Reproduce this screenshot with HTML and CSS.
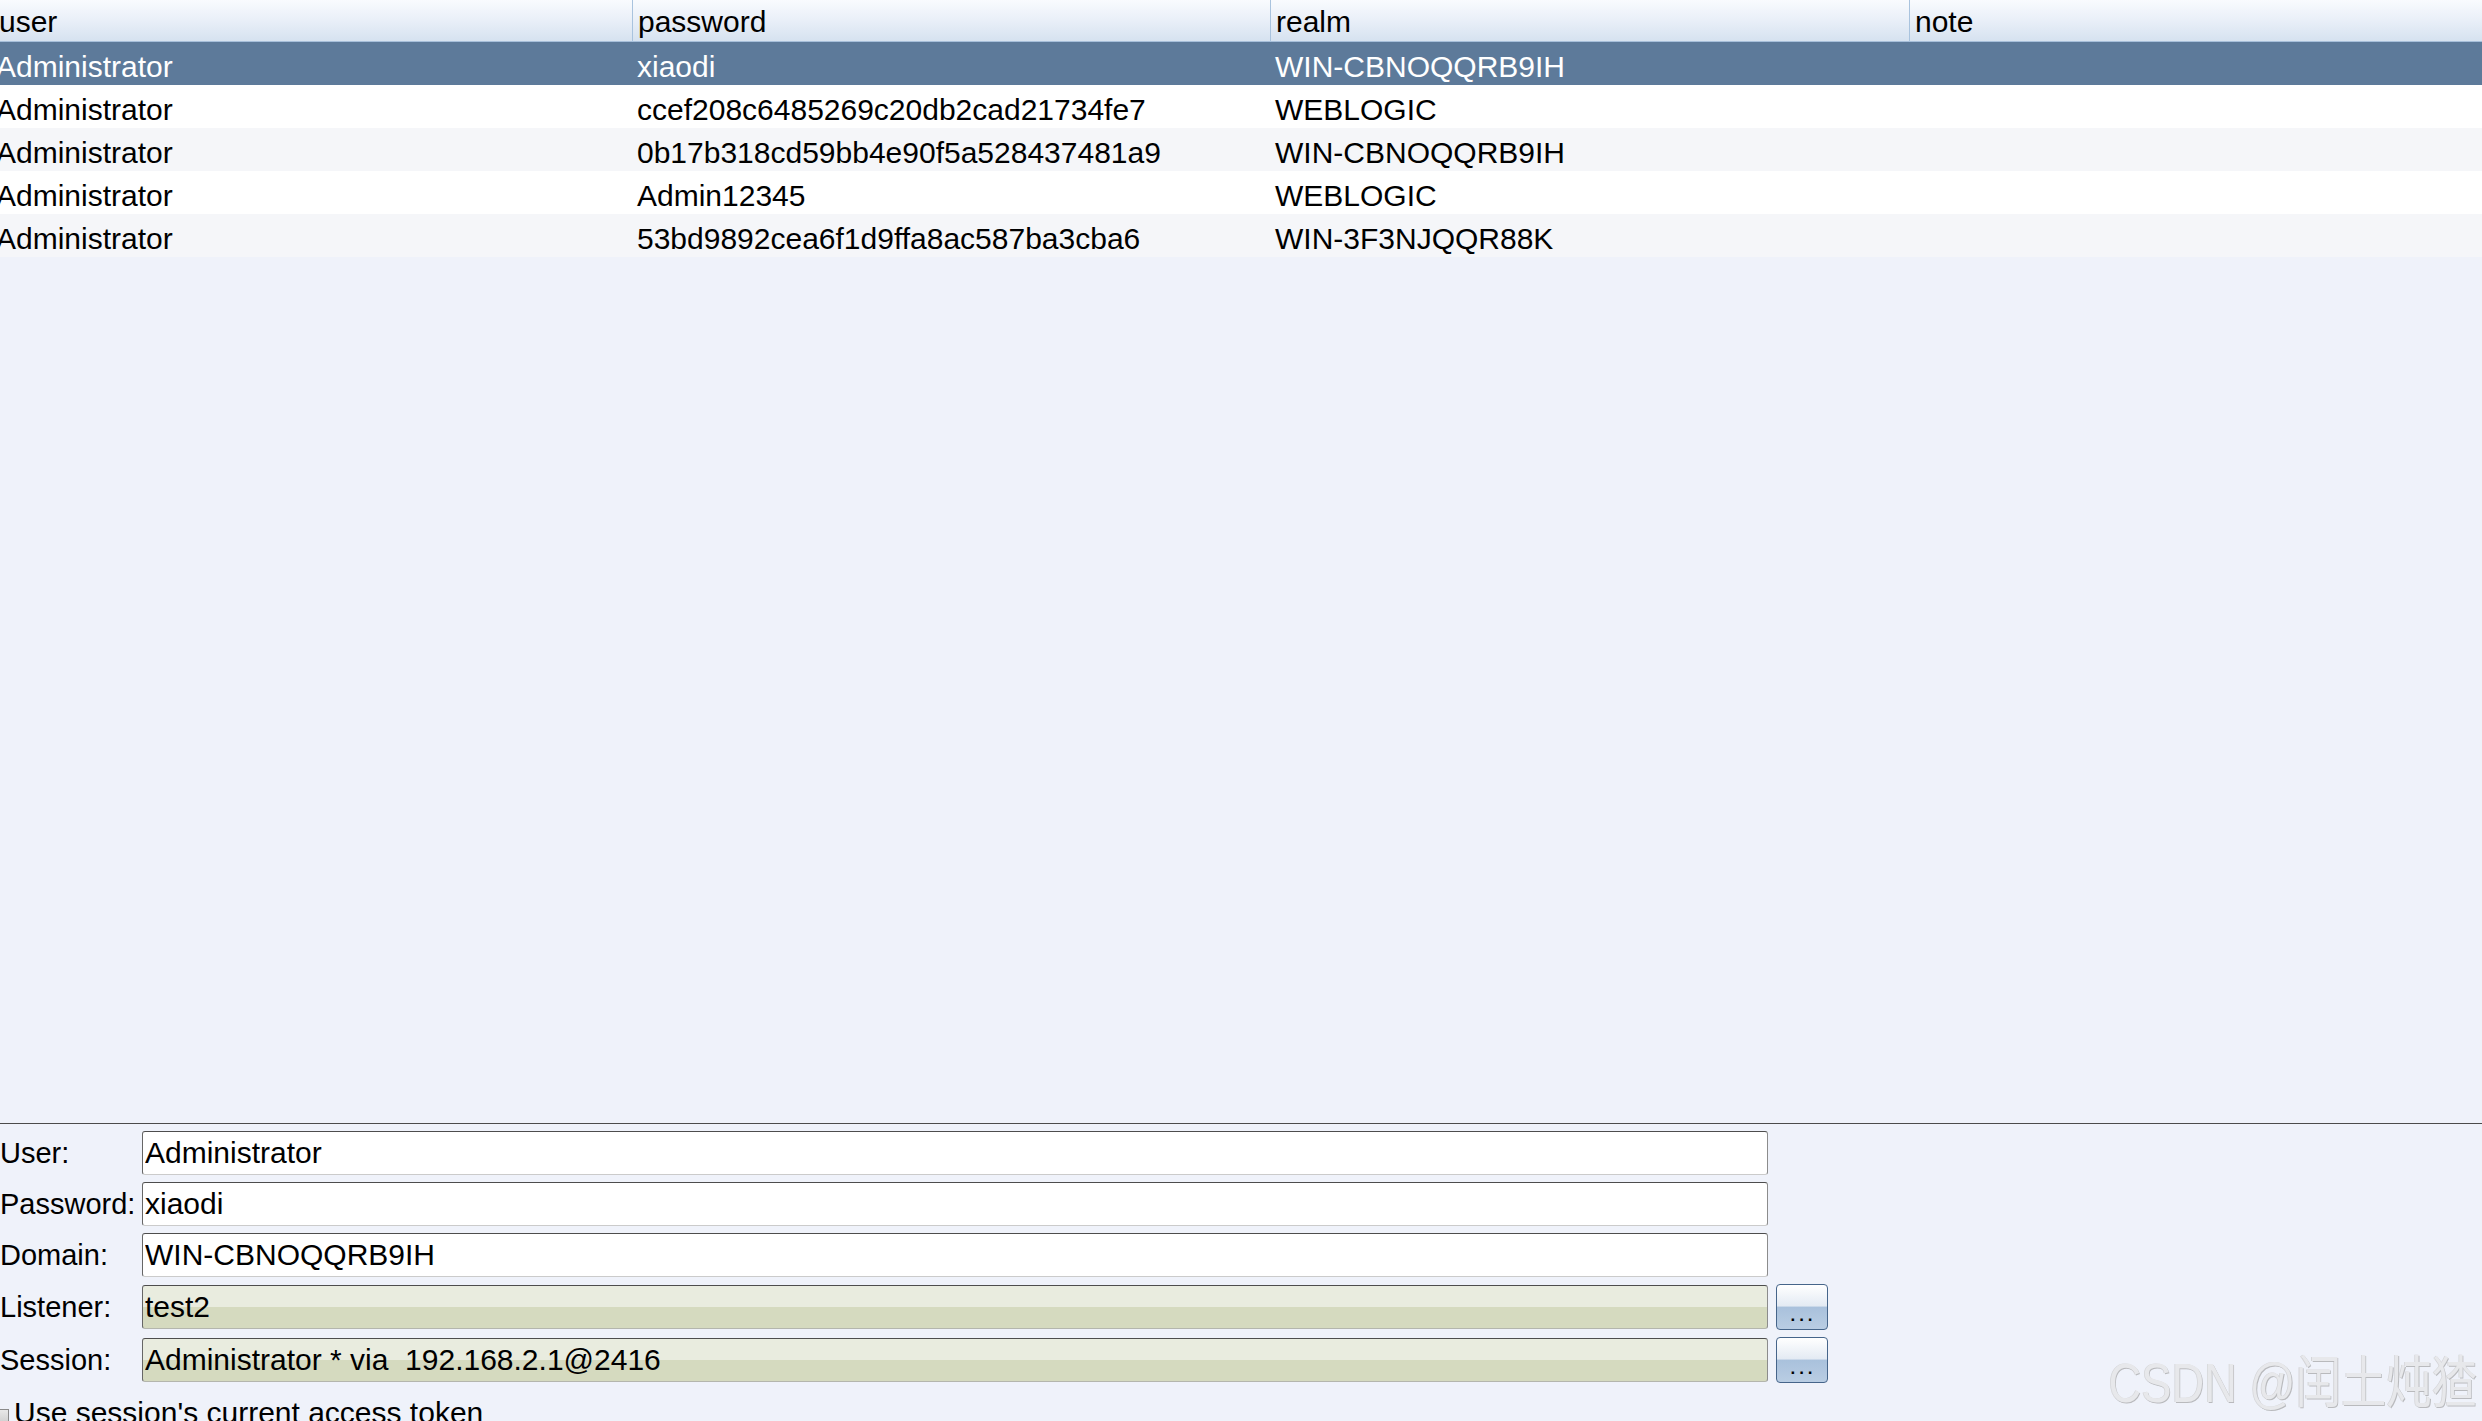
FILE: index.html
```html
<!DOCTYPE html>
<html>
<head>
    <title>Credentials</title>
    <meta charset="utf-8">
    <link rel="stylesheet" href="styles.css">
</head>
<body>
    <!-- Tabla de credenciales -->
    <div class="table-pane">
        <div class="cred-table">
            <div class="th">user</div>
            <div class="th">password</div>
            <div class="th">realm</div>
            <div class="th">note</div>

            <div class="tr selected">
                <div class="td">Administrator</div>
                <div class="td">xiaodi</div>
                <div class="td">WIN-CBNOQQRB9IH</div>
                <div class="td"></div>
            </div>
            <div class="tr">
                <div class="td">Administrator</div>
                <div class="td">ccef208c6485269c20db2cad21734fe7</div>
                <div class="td">WEBLOGIC</div>
                <div class="td"></div>
            </div>
            <div class="tr alt">
                <div class="td">Administrator</div>
                <div class="td">0b17b318cd59bb4e90f5a528437481a9</div>
                <div class="td">WIN-CBNOQQRB9IH</div>
                <div class="td"></div>
            </div>
            <div class="tr">
                <div class="td">Administrator</div>
                <div class="td">Admin12345</div>
                <div class="td">WEBLOGIC</div>
                <div class="td"></div>
            </div>
            <div class="tr alt">
                <div class="td">Administrator</div>
                <div class="td">53bd9892cea6f1d9ffa8ac587ba3cba6</div>
                <div class="td">WIN-3F3NJQQR88K</div>
                <div class="td"></div>
            </div>
        </div>
    </div>

    <!-- Formulario -->
    <div class="form-pane">
        <div class="form-grid">
            <label>User:</label>
            <input type="text" value="Administrator">
            <span></span>

            <label>Password:</label>
            <input type="text" value="xiaodi">
            <span></span>

            <label>Domain:</label>
            <input type="text" value="WIN-CBNOQQRB9IH">
            <span></span>

            <label>Listener:</label>
            <input type="text" class="locked" value="test2" readonly>
            <button class="pick">...</button>

            <label>Session:</label>
            <input type="text" class="locked" value="Administrator * via  192.168.2.1@2416" readonly>
            <button class="pick">...</button>

            <div class="token-row">
                <span class="check"></span>
                Use session's current access token
            </div>
        </div>
    </div>

    <div class="watermark">CSDN @闰土炖猹</div>
</body>
</html>
```

FILE: styles.css
```css
body {
    margin: 0;
    padding: 0;
    width: 2482px;
    height: 1421px;
    background-color: #eff2fa;
    color: #000;
    font-family: 'Liberation Sans', Arial, sans-serif;
    font-size: 30px;
    display: flex;
    flex-direction: column;
    overflow: hidden;
    position: relative;
}

/* Tabla */
.table-pane {
    flex: 1;
    overflow: hidden;
}

.cred-table {
    display: grid;
    grid-template-columns: 641px 638px 639px 1fr;
    margin-left: -9px;
}

.th {
    height: 42px;
    box-sizing: border-box;
    padding: 2px 0 0 5px;
    line-height: 39px;
    background: linear-gradient(#f9fbfe, #e9eff8 50%, #d6e2f0);
    border-bottom: 1px solid #a7bfda;
    border-left: 1px solid #a9c3de;
    white-space: nowrap;
}

.th:first-child {
    border-left: none;
    padding-left: 8px;
}

.tr {
    display: contents;
}

.td {
    height: 43px;
    box-sizing: border-box;
    padding: 6px 0 0 5px;
    line-height: 37px;
    background: #fff;
    white-space: nowrap;
}

.tr.alt .td {
    background: #f5f6f9;
}

.tr.selected .td {
    background: #5d7a9a;
    color: #fff;
}

/* Formulario */
.form-pane {
    flex: none;
    height: 298px;
    box-sizing: border-box;
    border-top: 1px solid #4b4b4b;
    padding-top: 7px;
    overflow: hidden;
}

.form-grid {
    display: grid;
    grid-template-columns: 134px 1626px 52px;
    column-gap: 8px;
    row-gap: 7px;
    align-items: center;
}

.form-grid label {
    white-space: nowrap;
    font-size: 29px;
    line-height: 44px;
}

.form-grid input {
    height: 44px;
    box-sizing: border-box;
    margin: 0;
    padding: 0 0 0 2px;
    font-family: 'Liberation Sans', Arial, sans-serif;
    font-size: 30px;
    color: #000;
    background: #fff;
    border: 1px solid #8c8c8c;
    border-top-color: #4d4d4d;
    border-left-color: #666;
    border-bottom-color: #cbcbcb;
    border-radius: 3px;
    outline: none;
}

.form-grid input.locked {
    background: linear-gradient(#e9ecdf 50%, #d5dabf 50%);
    border-bottom-color: #b4b6ad;
}

.pick {
    height: 46px;
    width: 52px;
    box-sizing: border-box;
    padding: 0 0 7px 3px;
    display: flex;
    align-items: flex-end;
    justify-content: center;
    background: linear-gradient(#ffffff, #e3eaf3 48%, #a9c1dc 50%, #b9cde3 100%);
    border: 1px solid #46658a;
    border-radius: 4px;
    font-family: 'Liberation Sans', Arial, sans-serif;
    font-size: 17px;
    font-weight: bold;
    letter-spacing: 4px;
    line-height: 12px;
    color: #000;
}

.token-row {
    grid-column: 1 / 4;
    margin-top: 6px;
    display: flex;
    align-items: center;
    gap: 5px;
    font-size: 30px;
    line-height: 34px;
    white-space: nowrap;
}

.check {
    width: 13px;
    height: 13px;
    margin-left: -6px;
    margin-top: 6px;
    border: 1px solid #8a8a8a;
    background: linear-gradient(#e8e8e8, #cfcfcf);
}

/* Marca de agua */
.watermark {
    position: absolute;
    right: 5px;
    top: 1355px;
    font-family: 'Liberation Sans', 'Noto Sans CJK SC', sans-serif;
    font-size: 56px;
    line-height: 56px;
    color: #e7e8eb;
    text-shadow: 1px 1px 0 #b9babd, -1px 0 0 #d4d5d8;
    transform: scaleX(0.81);
    transform-origin: right center;
    white-space: nowrap;
}
```
